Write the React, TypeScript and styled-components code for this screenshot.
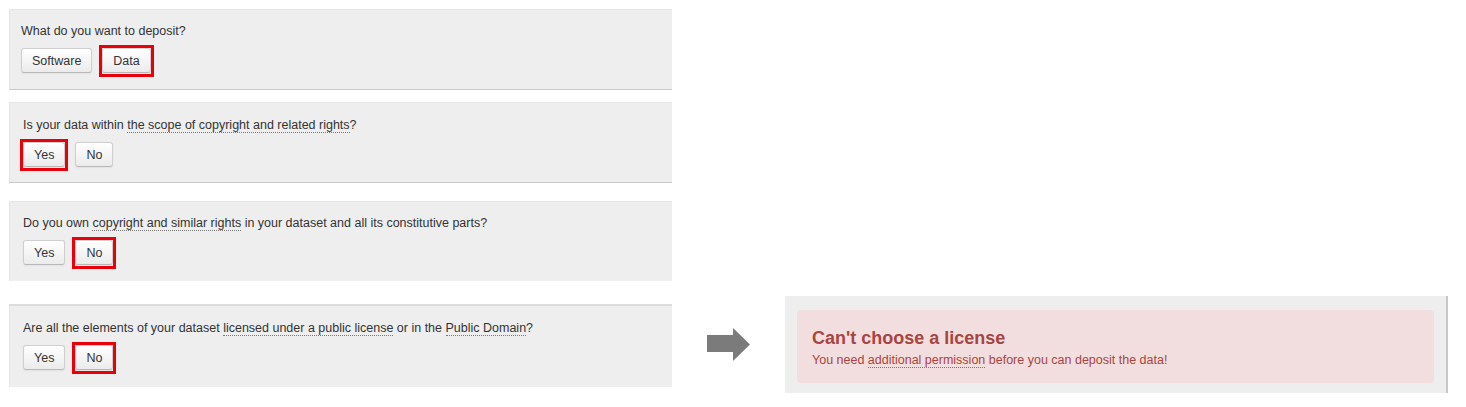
import styled, { createGlobalStyle } from "styled-components";

const GlobalStyle = createGlobalStyle`
  html, body {
    margin: 0;
    padding: 0;
    background: #fff;
  }
  body {
    font-family: "Liberation Sans", Arial, sans-serif;
    color: #333;
  }
`;

const Page = styled.div`
  display: flex;
  align-items: flex-start;
  height: 407px;
  box-sizing: border-box;
  padding: 9px 0 0 9px;
`;

const Column = styled.div`
  width: 663px;
  display: flex;
  flex-direction: column;
`;

const Panel = styled.section<{ $mt: number; $pt: number; $pl: number; $h: number; $top?: boolean; $bottom?: boolean }>`
  margin-top: ${(p) => p.$mt}px;
  height: ${(p) => p.$h}px;
  box-sizing: border-box;
  padding: ${(p) => p.$pt}px 12px 0 ${(p) => p.$pl}px;
  background: #eeeeee;
  border-left: 1px solid #e4e4e4;
  border-top: ${(p) => (p.$top ? "2px solid #dcdcdc" : "1px solid #e6e6e6")};
  border-bottom: ${(p) => (p.$bottom ? "1px solid #c8c8c8" : "none")};
`;

const Question = styled.p`
  margin: 0 0 8px;
  font-size: 12.5px;
  line-height: 17px;
`;

const Term = styled.abbr`
  text-decoration: none;
  border-bottom: 1px dotted #777;
  cursor: help;
`;

const Choices = styled.div`
  display: flex;
  gap: 10px;
`;

const Choice = styled.button<{ $picked?: boolean }>`
  position: relative;
  height: 25px;
  padding: 0 10px;
  font-family: inherit;
  font-size: 12.5px;
  color: #333;
  background: linear-gradient(to bottom, #ffffff, #ebebeb);
  border: 1px solid #cfcfcf;
  border-bottom-color: #b8b8b8;
  border-radius: 3px;
  box-shadow: 0 1px 2px rgba(0, 0, 0, 0.05);

  &::after {
    content: "";
    display: ${(p) => (p.$picked ? "block" : "none")};
    position: absolute;
    top: -4px;
    left: -4px;
    right: -4px;
    bottom: -5px;
    border: 3px solid #e8000b;
  }
`;

const ArrowBox = styled.div`
  align-self: flex-end;
  margin: 0 35px 46px 35px;
  line-height: 0;
`;

const Result = styled.section`
  align-self: flex-end;
  margin-bottom: 14px;
  width: 663px;
  height: 97px;
  box-sizing: border-box;
  padding: 14px 12px 10px 12px;
  background: #eeeeee;
  border-right: 2px solid #c8c8c8;
`;

const Alert = styled.div`
  height: 73px;
  box-sizing: border-box;
  padding: 18px 15px 0;
  background: #f2dede;
  border-radius: 4px;
  color: #a94442;
`;

const AlertTitle = styled.h4`
  margin: 0 0 4px;
  font-size: 18px;
  line-height: 20px;
  font-weight: bold;
`;

const AlertText = styled.p`
  margin: 0;
  font-size: 12.5px;
  line-height: 17px;
`;

const questions = [
  {
    mt: 0,
    pt: 13,
    pl: 11,
    h: 81,
    bottom: true,
    text: <>What do you want to deposit?</>,
    options: ["Software", "Data"],
    picked: 1,
  },
  {
    mt: 12,
    pt: 14,
    pl: 13,
    h: 81,
    bottom: true,
    text: (
      <>
        Is your data within <Term>the scope of copyright and related rights</Term>?
      </>
    ),
    options: ["Yes", "No"],
    picked: 0,
  },
  {
    mt: 18,
    pt: 13,
    pl: 13,
    h: 80,
    text: (
      <>
        Do you own <Term>copyright and similar rights</Term> in your dataset and all its constitutive parts?
      </>
    ),
    options: ["Yes", "No"],
    picked: 1,
  },
  {
    mt: 23,
    pt: 14,
    pl: 13,
    h: 83,
    top: true,
    text: (
      <>
        Are all the elements of your dataset <Term>licensed under a public license</Term> or in the{" "}
        <Term>Public Domain</Term>?
      </>
    ),
    options: ["Yes", "No"],
    picked: 1,
  },
];

function Arrow() {
  return (
    <svg width="43" height="33" viewBox="0 0 43 33">
      <path d="M0 7 H26 V0 L43 16.5 L26 33 V24 H0 Z" fill="#7b7b7b" />
    </svg>
  );
}

export default function App() {
  return (
    <>
      <GlobalStyle />
      <Page>
        <Column>
          {questions.map((q, i) => (
            <Panel key={i} $mt={q.mt} $pt={q.pt} $pl={q.pl} $h={q.h} $top={q.top} $bottom={q.bottom}>
              <Question>{q.text}</Question>
              <Choices>
                {q.options.map((o, j) => (
                  <Choice key={o} $picked={j === q.picked}>
                    {o}
                  </Choice>
                ))}
              </Choices>
            </Panel>
          ))}
        </Column>
        <ArrowBox>
          <Arrow />
        </ArrowBox>
        <Result>
          <Alert>
            <AlertTitle>Can't choose a license</AlertTitle>
            <AlertText>
              You need <Term>additional permission</Term> before you can deposit the data!
            </AlertText>
          </Alert>
        </Result>
      </Page>
    </>
  );
}
